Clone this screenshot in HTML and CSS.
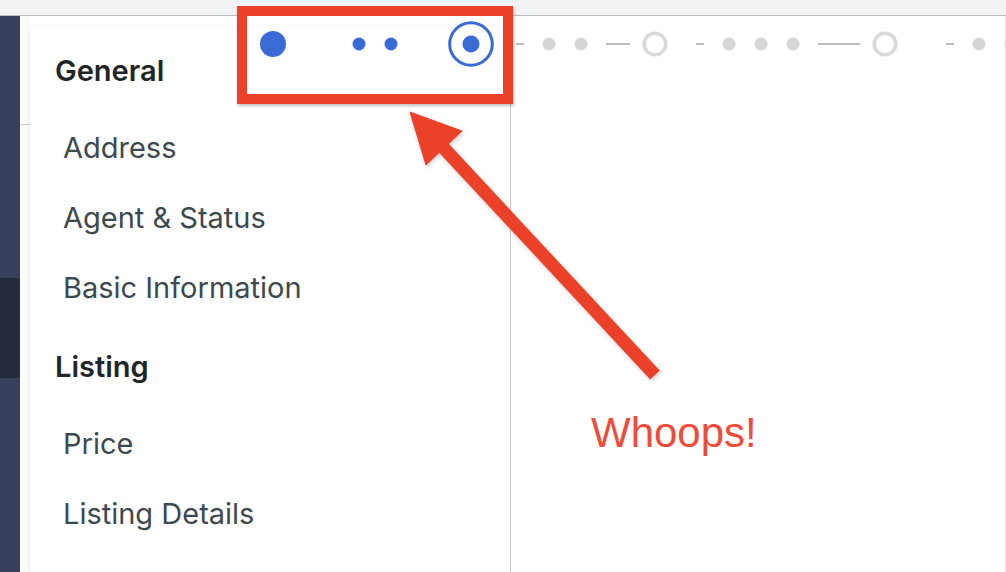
FILE: index.html
```html
<!DOCTYPE html>
<html lang="en">
<head>
<meta charset="utf-8">
<title>Listing editor</title>
<link rel="stylesheet" href="styles.css">
</head>
<body>
<div class="topbar"></div>
<div class="layout">
  <aside class="sidebar">
    <div class="sb-top"></div>
    <div class="sb-active"></div>
    <div class="sb-rest"></div>
  </aside>
  <div class="gutter"><div class="gutter-line"></div></div>
  <section class="card">
    <nav class="menu">
      <div class="menu-group">
        <div class="menu-heading">General</div>
        <div class="menu-item">Address</div>
        <div class="menu-item">Agent &amp; Status</div>
        <div class="menu-item">Basic Information</div>
      </div>
      <div class="menu-group">
        <div class="menu-heading">Listing</div>
        <div class="menu-item">Price</div>
        <div class="menu-item">Listing Details</div>
      </div>
    </nav>
  </section>
  <section class="panel"></section>
</div>

<svg class="stepper" width="1006" height="80" viewBox="0 0 1006 80">
  <g fill="#3a6bd4">
    <circle cx="273" cy="44" r="13"/>
    <circle cx="359" cy="44" r="6.5"/>
    <circle cx="391" cy="44" r="6.5"/>
    <circle cx="471" cy="44" r="8.5"/>
  </g>
  <circle cx="471" cy="44" r="21.3" fill="none" stroke="#3a6bd4" stroke-width="3"/>
  <g stroke="#bdbdbd" stroke-width="2">
    <line x1="516" y1="44" x2="524" y2="44"/>
    <line x1="606" y1="44" x2="630" y2="44"/>
    <line x1="696" y1="44" x2="704" y2="44"/>
    <line x1="818" y1="44" x2="860" y2="44"/>
    <line x1="946" y1="44" x2="954" y2="44"/>
  </g>
  <g fill="#d6d6d6">
    <circle cx="549" cy="44" r="6.5"/>
    <circle cx="581" cy="44" r="6.5"/>
    <circle cx="729" cy="44" r="6.5"/>
    <circle cx="761" cy="44" r="6.5"/>
    <circle cx="793" cy="44" r="6.5"/>
    <circle cx="979" cy="44" r="6.5"/>
    <circle cx="1011" cy="44" r="6.5"/>
  </g>
  <g fill="none" stroke="#d9d9d9" stroke-width="3.5">
    <circle cx="655" cy="44" r="10.8"/>
    <circle cx="885" cy="44" r="10.8"/>
  </g>
</svg>

<div class="callout"></div>

<svg class="arrow" width="1006" height="572" viewBox="0 0 1006 572">
  <g fill="#ec4129" stroke="#ec4129">
    <line x1="440" y1="144" x2="655" y2="375" stroke-width="13"/>
    <polygon points="410,112 462,131 426,165" stroke-width="1" stroke-linejoin="miter"/>
  </g>
</svg>

<div class="whoops">Whoops!</div>
</body>
</html>
```

FILE: styles.css
```css
html, body {
  margin: 0;
  padding: 0;
  width: 1006px;
  height: 572px;
  overflow: hidden;
  background: #ffffff;
  font-family: "Inter", "Liberation Sans", sans-serif;
}

.topbar {
  height: 15px;
  background: #f1f2f4;
  border-bottom: 1px solid #bcbcbc;
}

.layout {
  display: flex;
  height: 556px;
}

.sidebar {
  width: 20px;
  display: flex;
  flex-direction: column;
  flex: none;
}
.sb-top { height: 262px; background: #37415c; }
.sb-active { height: 100px; background: #232a3a; }
.sb-rest { flex: 1; background: #37415c; }

.gutter {
  width: 10px;
  flex: none;
  background: #fbfbfb;
}
.gutter-line {
  margin-top: 108px;
  height: 1px;
  background: #cfcfcf;
}

.card {
  width: 480px;
  flex: none;
  margin-top: 10px;
  background: #ffffff;
  border-right: 1px solid #c9c9c9;
  border-top-left-radius: 6px;
  box-shadow: -1px 0 3px rgba(0, 0, 0, 0.06);
}

.menu {
  padding: 10px 0 0 25px;
}

.menu-group + .menu-group {
  margin-top: 9px;
}

.menu-heading {
  height: 70px;
  line-height: 70px;
  margin-bottom: 7px;
  font-size: 29px;
  font-weight: 600;
  color: #1f2628;
}

.menu-item {
  height: 70px;
  line-height: 70px;
  padding-left: 8px;
  font-size: 29px;
  font-weight: 400;
  color: #3c494e;
}

.panel {
  flex: 1;
  background: #ffffff;
  border-right: 1px solid #e2e2e2;
}

.stepper {
  position: absolute;
  left: 0;
  top: 0;
}

.callout {
  position: absolute;
  left: 237px;
  top: 6px;
  width: 256px;
  height: 78px;
  border: 10px solid #ec4129;
  box-shadow: 1px 2px 3px rgba(0, 0, 0, 0.25);
}

.arrow {
  position: absolute;
  left: 0;
  top: 0;
  filter: drop-shadow(1px 2px 2px rgba(0, 0, 0, 0.2));
}

.whoops {
  position: absolute;
  left: 591px;
  top: 412px;
  font-family: "Liberation Sans", Arial, sans-serif;
  font-size: 42px;
  line-height: 42px;
  color: #ef4b3a;
}
```
